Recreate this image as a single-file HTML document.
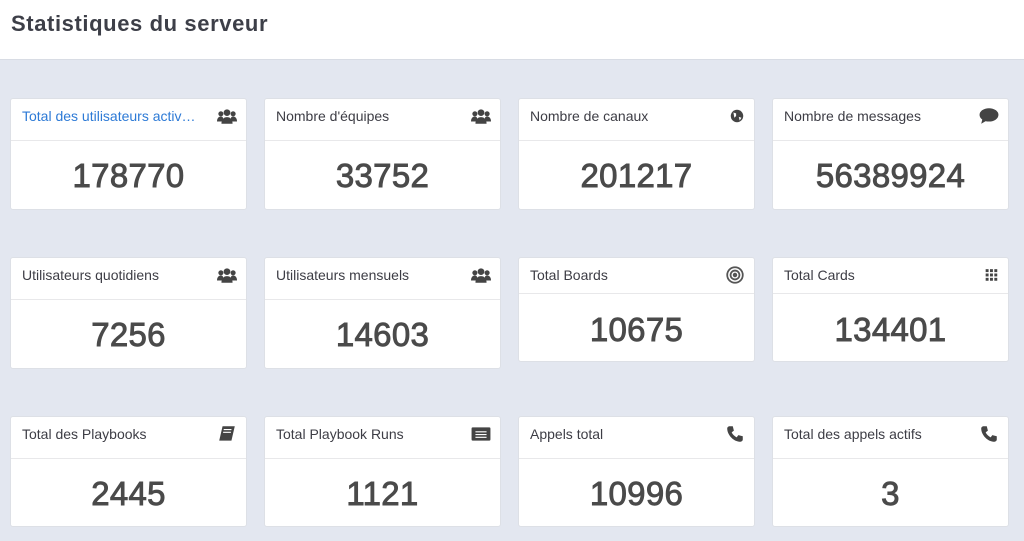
<!DOCTYPE html>
<html><head><meta charset="utf-8"><style>
*{box-sizing:border-box;margin:0;padding:0}
body{width:1024px;height:541px;background:#e3e7f0;font-family:"Liberation Sans",sans-serif;position:relative;overflow:hidden}
.hd{position:absolute;left:0;top:0;width:1024px;height:60px;background:#fff;border-bottom:1px solid #d8dce4}
.hd h1{position:absolute;left:11px;top:11px;font-size:22px;font-weight:bold;color:#3d3f48;letter-spacing:0.6px}
.c{position:absolute;width:237px;background:#fff;border-radius:3px;border:1px solid #dde0e6}
.t{height:42px;border-bottom:1px solid #e8e8ea;padding:9px 11px 0;font-size:14px;color:#3d3d45;position:relative;white-space:nowrap}
.t.s{height:36px}
.t.blue{color:#2d7ad6}
.ic{position:absolute;right:9px;top:7px;width:20px;height:20px;fill:#444}
.n{text-align:center;font-size:33px;font-weight:normal;-webkit-text-stroke:0.9px #4a4a4a;color:#4a4a4a;padding-top:16px;letter-spacing:0.3px}
</style></head><body>
<div class="hd"><h1>Statistiques du serveur</h1></div>
<svg width="0" height="0" style="position:absolute"><defs>
<g id="grp"><circle cx="9" cy="5" r="3"/><circle cx="3.5" cy="6" r="2.3"/><circle cx="14.5" cy="6" r="2.3"/><path d="M4 15c0-4 2-6 5-6s5 2 5 6z"/><path d="M0 13c0-3 1.5-4.5 3.5-4.5S6 10 5 13z"/><path d="M18 13c0-3-1.5-4.5-3.5-4.5S12 10 13 13z"/></g>
<g id="ph"><path d="M4 2l3 0 1 4-2 1.5c1 2 2.5 3.5 4.5 4.5L12 10l4 1v3c0 1-1 2-2 2C8 16 2 10 2 4c0-1 1-2 2-2z"/></g>
</defs></svg>

<div class="c" style="left:10px;top:98px;height:112px"><div class="t blue">Total des utilisateurs activ…<svg class="ic" viewBox="0 0 18 16"><use href="#grp"/></svg></div><div class="n">178770</div></div>
<div class="c" style="left:264px;top:98px;height:112px"><div class="t">Nombre d'équipes<svg class="ic" viewBox="0 0 18 16"><use href="#grp"/></svg></div><div class="n">33752</div></div>
<div class="c" style="left:518px;top:98px;height:112px"><div class="t">Nombre de canaux<svg class="ic" viewBox="0 0 18 18" style="width:16px"><circle cx="9" cy="9" r="7"/><path d="M5 5l3 1 0 3-2 2z M11 10l3 1-2 3z" fill="#fff"/></svg></div><div class="n">201217</div></div>
<div class="c" style="left:772px;top:98px;height:112px"><div class="t">Nombre de messages<svg class="ic" viewBox="0 0 18 16"><ellipse cx="9" cy="7" rx="8.5" ry="6"/><path d="M3 11l-1 4 5-3z"/></svg></div><div class="n">56389924</div></div>

<div class="c" style="left:10px;top:257px;height:112px"><div class="t">Utilisateurs quotidiens<svg class="ic" viewBox="0 0 18 16"><use href="#grp"/></svg></div><div class="n">7256</div></div>
<div class="c" style="left:264px;top:257px;height:112px"><div class="t">Utilisateurs mensuels<svg class="ic" viewBox="0 0 18 16"><use href="#grp"/></svg></div><div class="n">14603</div></div>
<div class="c" style="left:518px;top:257px;height:105px"><div class="t s">Total Boards<svg class="ic" viewBox="0 0 18 18" style="fill:none;stroke:#555;stroke-width:1.6"><circle cx="9" cy="9" r="7"/><circle cx="9" cy="9" r="4"/><circle cx="9" cy="9" r="1.2" fill="#555"/></svg></div><div class="n" style="padding-top:17px">10675</div></div>
<div class="c" style="left:772px;top:257px;height:105px"><div class="t s">Total Cards<svg class="ic" viewBox="0 0 18 18" style="width:15px"><g><rect x="2" y="2" width="3.5" height="3.5"/><rect x="7.2" y="2" width="3.5" height="3.5"/><rect x="12.4" y="2" width="3.5" height="3.5"/><rect x="2" y="7.2" width="3.5" height="3.5"/><rect x="7.2" y="7.2" width="3.5" height="3.5"/><rect x="12.4" y="7.2" width="3.5" height="3.5"/><rect x="2" y="12.4" width="3.5" height="3.5"/><rect x="7.2" y="12.4" width="3.5" height="3.5"/><rect x="12.4" y="12.4" width="3.5" height="3.5"/></g></svg></div><div class="n" style="padding-top:17px">134401</div></div>

<div class="c" style="left:10px;top:416px;height:111px"><div class="t">Total des Playbooks<svg class="ic" viewBox="0 0 18 18"><path d="M5 2h11l-3 13H2z"/><path d="M6 5h7M5.5 7.5h7" stroke="#fff" stroke-width="1"/></svg></div><div class="n">2445</div></div>
<div class="c" style="left:264px;top:416px;height:111px"><div class="t">Total Playbook Runs<svg class="ic" viewBox="0 0 18 16"><rect x="0.5" y="2" width="17" height="12" rx="1"/><path d="M4 6h10M4 8.5h10M4 11h10" stroke="#fff" stroke-width="1"/></svg></div><div class="n">1121</div></div>
<div class="c" style="left:518px;top:416px;height:111px"><div class="t">Appels total<svg class="ic" viewBox="0 0 18 18"><use href="#ph"/></svg></div><div class="n">10996</div></div>
<div class="c" style="left:772px;top:416px;height:111px"><div class="t">Total des appels actifs<svg class="ic" viewBox="0 0 18 18"><use href="#ph"/></svg></div><div class="n">3</div></div>
</body></html>
